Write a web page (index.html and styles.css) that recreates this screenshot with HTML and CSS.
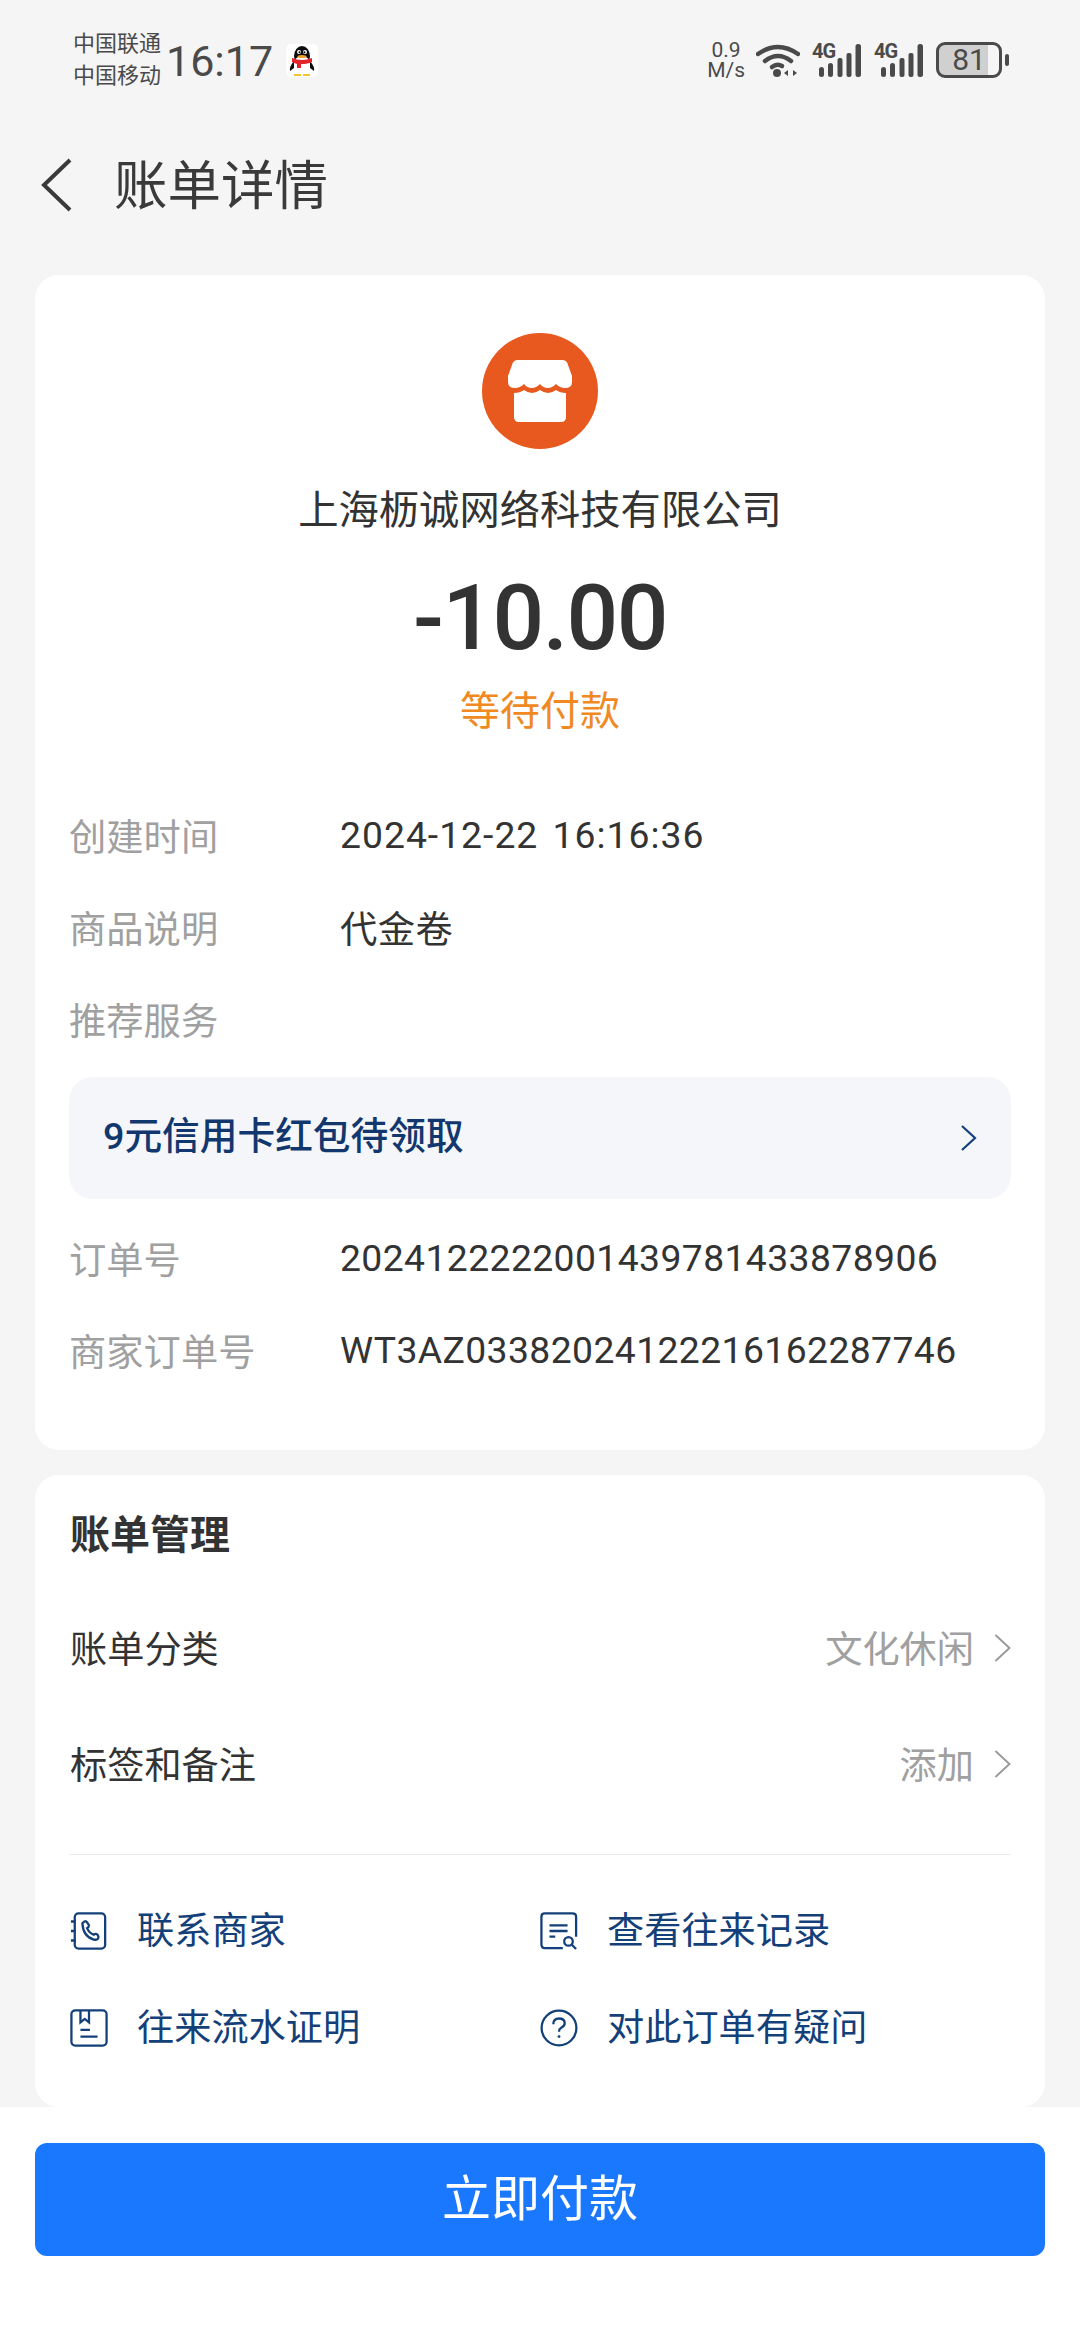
FILE: index.html
```html
<!DOCTYPE html>
<html lang="zh-CN">
<head>
    <meta charset="UTF-8">
    <meta name="viewport" content="width=device-width, initial-scale=1.0">
    <title>账单详情</title>
    <link rel="stylesheet" href="styles.css">
</head>
<body>
    <div class="page">
        <!-- 状态栏 -->
        <div class="status-bar">
            <div class="carrier"><span>中国联通</span><span>中国移动</span></div>
            <div class="clock">16:17</div>
            <svg class="qq-icon" viewBox="0 0 32 33">
                <rect width="32" height="33" rx="5" fill="#fff"/>
                <ellipse cx="16" cy="12" rx="8" ry="10" fill="#0c0c0c"/>
                <path d="M8 17 Q3 23 4 27 L8 24 V17 M24 17 Q29 23 28 27 L24 24 V17" fill="#0c0c0c"/>
                <ellipse cx="16" cy="21" rx="8" ry="9.500" fill="#fff"/>
                <path d="M6 14 Q16 18 26 14 V18 Q22 20 15 20 V24 H11 V20 Q8 19 6 18 Z" fill="#e2242a"/>
                <circle cx="13" cy="8" r="2" fill="#fff"/><circle cx="19" cy="8" r="2" fill="#fff"/>
                <circle cx="13.500" cy="8.300" r="1" fill="#000"/><circle cx="18.500" cy="8.300" r="1" fill="#000"/>
                <ellipse cx="16" cy="12.500" rx="4.500" ry="1.600" fill="#f0a020"/>
                <rect x="8" y="30" width="7" height="2" fill="#f2c230"/><rect x="17" y="30" width="7" height="2" fill="#f2c230"/>
            </svg>
            <div class="status-right">
                <div class="speed"><span>0.9</span><span>M/s</span></div>
                <svg class="wifi" viewBox="0 0 44 34" fill="none" stroke="#4a4a4a" stroke-width="4.500" stroke-linecap="round">
                    <path d="M2 11 Q22 -3 42 11"/>
                    <path d="M9 18 Q22 8 35 18"/>
                    <path d="M16 24 Q21 20 26 23"/>
                    <circle cx="21" cy="30" r="4" fill="#4a4a4a" stroke="none"/>
                    <path d="M32 27 L28 30 L32 33 Z M37 27 L41 30 L37 33 Z" fill="#4a4a4a" stroke="none"/>
                </svg>
                <div class="signal">
                    <span class="signal-type">4G</span>
                    <svg viewBox="0 0 50 34" fill="#4a4a4a">
                        <rect x="7" y="24" width="5" height="10" rx="2.500"/>
                        <rect x="16" y="20" width="5" height="14" rx="2.500"/>
                        <rect x="25.500" y="15" width="5" height="19" rx="2"/>
                        <rect x="34.500" y="10" width="5" height="24" rx="2"/>
                        <rect x="43.500" y="1" width="5.500" height="33" rx="2.500"/>
                    </svg>
                </div>
                <div class="signal">
                    <span class="signal-type">4G</span>
                    <svg viewBox="0 0 50 34" fill="#4a4a4a">
                        <rect x="7" y="24" width="5" height="10" rx="2.500"/>
                        <rect x="16" y="20" width="5" height="14" rx="2.500"/>
                        <rect x="25.500" y="15" width="5" height="19" rx="2"/>
                        <rect x="34.500" y="10" width="5" height="24" rx="2"/>
                        <rect x="43.500" y="1" width="5.500" height="33" rx="2.500"/>
                    </svg>
                </div>
                <div class="battery">
                    <div class="battery-body"><span>81</span></div>
                    <div class="battery-cap"></div>
                </div>
            </div>
        </div>

        <!-- 标题栏 -->
        <div class="title-bar">
            <svg class="back-icon" viewBox="0 0 32 54" fill="none" stroke="#3a3a3a" stroke-width="4">
                <path d="M30 2 L4 27 L30 52"/>
            </svg>
            <h1>账单详情</h1>
        </div>

        <div class="content">
            <div class="card bill-card">
                <div class="shop-avatar">
                    <svg viewBox="0 0 116 116">
                        <circle cx="58" cy="58" r="58" fill="#e8591f"/>
                        <path d="M36 27 H80 Q85 27 86 32 L90 43 V49 Q90 55 83 55 Q78 55 74 51 Q70 55 66 55 Q61 55 58 51 Q54 55 50 55 Q45 55 42 51 Q38 55 33 55 Q26 55 26 49 V43 L30 32 Q31 27 36 27 Z" fill="#fff"/>
                        <path d="M32 60 Q38 60 42 57 Q46 60 50 60 Q54 60 58 57 Q62 60 66 60 Q70 60 74 57 Q78 60 84 60 V84 Q84 89 79 89 H37 Q32 89 32 84 Z" fill="#fff"/>
                    </svg>
                </div>
                <div class="shop-name">上海枥诚网络科技有限公司</div>
                <div class="amount">-10.00</div>
                <div class="pay-status">等待付款</div>

                <div class="info-list">
                    <div class="info-row"><label>创建时间</label><span class="date-value">2024-12-22 16:16:36</span></div>
                    <div class="info-row"><label>商品说明</label><span>代金卷</span></div>
                    <div class="info-row"><label>推荐服务</label></div>
                </div>
                <div class="promo">
                    <span>9元信用卡红包待领取</span>
                    <svg class="promo-arrow" viewBox="0 0 16 26" fill="none" stroke="#14407a" stroke-width="2.200">
                        <path d="M1 1 L14 13 L1 25"/>
                    </svg>
                </div>
                <div class="info-list order-list">
                    <div class="info-row"><label>订单号</label><span>2024122222001439781433878906</span></div>
                    <div class="info-row"><label>商家订单号</label><span>WT3AZ03382024122216162287746</span></div>
                </div>
            </div>

            <div class="card manage-card">
                <h2>账单管理</h2>
                <div class="manage-row">
                    <span>账单分类</span>
                    <div class="manage-value">文化休闲
                        <svg viewBox="0 0 16 26" fill="none" stroke="#9a9a9a" stroke-width="1.800"><path d="M1 1 L14 13 L1 25"/></svg>
                    </div>
                </div>
                <div class="manage-row">
                    <span>标签和备注</span>
                    <div class="manage-value">添加
                        <svg viewBox="0 0 16 26" fill="none" stroke="#9a9a9a" stroke-width="1.800"><path d="M1 1 L14 13 L1 25"/></svg>
                    </div>
                </div>
                <div class="divider"></div>
                <div class="action-grid">
                    <div class="action-item">
                        <svg viewBox="0 0 40 40" fill="none" stroke="#14407a" stroke-width="2.400">
                            <rect x="5" y="1.500" width="32" height="37" rx="4"/>
                            <path d="M1 10 H6 M1 20 H6 M1 30 H6"/>
                            <path d="M13 12 Q16 8 18 11 L20 14 Q20 16 18 17 Q20 22 25 24 Q27 22 29 24 L30 26 Q30 30 25 29 Q14 26 13 12 Z"/>
                        </svg>
                        <span>联系商家</span>
                    </div>
                    <div class="action-item">
                        <svg viewBox="0 0 40 40" fill="none" stroke="#14407a" stroke-width="2.400">
                            <path d="M38 26 V5 Q38 1.500 34 1.500 H5 Q1.500 1.500 1.500 5 V34 Q1.500 38 5 38 H24"/>
                            <path d="M10 14 H29 M10 20 H29 M10 26 H16"/>
                            <circle cx="30" cy="31" r="4.500"/>
                            <path d="M33.500 34.500 L38 39"/>
                        </svg>
                        <span>查看往来记录</span>
                    </div>
                    <div class="action-item">
                        <svg viewBox="0 0 40 40" fill="none" stroke="#14407a" stroke-width="2.400">
                            <rect x="1.500" y="1.500" width="37" height="37" rx="4"/>
                            <path d="M11 2 V14 L15.500 10.500 L20 14 V2"/>
                            <path d="M11 22 H21 M11 29 H29"/>
                        </svg>
                        <span>往来流水证明</span>
                    </div>
                    <div class="action-item">
                        <svg viewBox="0 0 40 40" fill="none" stroke="#14407a" stroke-width="2.400">
                            <circle cx="20" cy="20" r="18.300"/>
                            <path d="M14 16 Q14 10 20 10 Q26 10 26 15 Q26 18 22 20 Q20 21 20 24"/>
                            <circle cx="20" cy="29" r="1.500" fill="#14407a" stroke="none"/>
                        </svg>
                        <span>对此订单有疑问</span>
                    </div>
                </div>
            </div>
        </div>

        <div class="footer">
            <button class="pay-btn">立即付款</button>
        </div>
    </div>
</body>
</html>
```

FILE: styles.css
```css
* {
    box-sizing: border-box;
}

html, body {
    margin: 0;
    padding: 0;
}

body {
    font-family: Roboto, "Noto Sans CJK SC", sans-serif;
    background: #f5f5f5;
    color: #333;
}

.page {
    width: 1080px;
    height: 2340px;
    display: flex;
    flex-direction: column;
    overflow: hidden;
}

/* 状态栏 */
.status-bar {
    height: 120px;
    padding: 28px 71px 0 73px;
    display: flex;
    align-items: flex-start;
    color: #4a4a4a;
}

.carrier {
    display: flex;
    flex-direction: column;
    font-size: 22px;
    line-height: 32px;
}

.clock {
    margin-left: 5px;
    font-size: 43px;
    line-height: 66px;
}

.qq-icon {
    width: 32px;
    height: 33px;
    margin: 16px 0 0 13px;
}

.status-right {
    margin-left: auto;
    display: flex;
    align-items: center;
    height: 38px;
    margin-top: 13px;
}

.speed {
    display: flex;
    flex-direction: column;
    align-items: center;
    font-size: 21px;
    line-height: 20px;
}

.wifi {
    width: 44px;
    height: 34px;
    margin-left: 11px;
}

.signal {
    position: relative;
    width: 50px;
    height: 34px;
    margin-left: 12px;
}

.signal svg {
    display: block;
    width: 50px;
    height: 34px;
}

.signal-type {
    position: absolute;
    left: 0;
    top: -2px;
    font-size: 20px;
    line-height: 20px;
    font-weight: 700;
    letter-spacing: -1px;
}

.battery {
    display: flex;
    align-items: center;
    margin-left: 12px;
}

.battery-body {
    width: 66px;
    height: 36px;
    border: 3px solid #4a4a4a;
    border-radius: 9px;
    background: linear-gradient(to right, #d0d0d0 81%, transparent 81%);
    display: flex;
    align-items: center;
    justify-content: center;
    font-size: 30px;
    line-height: 30px;
}

.battery-cap {
    width: 4px;
    height: 12px;
    margin-left: 3px;
    border-radius: 2px;
    background: #4a4a4a;
}

/* 标题栏 */
.title-bar {
    height: 155px;
    padding: 0 0 26px 40px;
    display: flex;
    align-items: center;
}

.back-icon {
    width: 32px;
    height: 54px;
}

.title-bar h1 {
    margin: 0 0 6px 42px;
    font-size: 53.500px;
    font-weight: 400;
    color: #3a3a3a;
}

.content {
    flex: 1;
    padding: 0 35px;
}

.card {
    background: #fff;
    border-radius: 24px;
    padding-left: 35px;
    padding-right: 35px;
}

.bill-card {
    height: 1175px;
    padding-top: 58px;
    padding-left: 34px;
    padding-right: 34px;
}

.shop-avatar {
    width: 116px;
    height: 116px;
    margin: 0 auto;
}

.shop-avatar svg {
    display: block;
    width: 116px;
    height: 116px;
}

.shop-name {
    margin-top: 34px;
    text-align: center;
    font-size: 40.300px;
    line-height: 56px;
}

.amount {
    margin-top: 29px;
    text-align: center;
    font-size: 91px;
    line-height: 100px;
    font-weight: 500;
    letter-spacing: -1.500px;
    color: #333;
}

.pay-status {
    margin-top: 16px;
    text-align: center;
    font-size: 40px;
    line-height: 56px;
    color: #f0891f;
}

.info-list {
    margin-top: 51px;
}

.order-list {
    margin-top: 15px;
}

.info-row {
    height: 92px;
    padding-bottom: 5px;
    display: flex;
    align-items: center;
    font-size: 37.300px;
    letter-spacing: 0.400px;
}

.info-row label {
    width: 271px;
    flex-shrink: 0;
    color: #a0a0a0;
    letter-spacing: 0;
}

.date-value {
    letter-spacing: 1px;
    word-spacing: 4px;
}

.promo {
    height: 122px;
    margin-top: 10px;
    padding: 0 34px 12px;
    display: flex;
    align-items: center;
    justify-content: space-between;
    border-radius: 24px;
    background: #f4f6fa;
    font-size: 37.700px;
    font-weight: 500;
    color: #12366e;
}

.promo-arrow {
    width: 16px;
    height: 26px;
    margin-top: 12px;
}

.manage-card {
    height: 632px;
    margin-top: 25px;
    padding-top: 33px;
}

.manage-card h2 {
    margin: 0 0 27px 0;
    font-size: 40px;
    line-height: 56px;
    font-weight: 700;
    color: #333;
}

.manage-row {
    height: 116px;
    padding-bottom: 4px;
    display: flex;
    align-items: center;
    justify-content: space-between;
    font-size: 37.200px;
}

.manage-value {
    display: flex;
    align-items: center;
    gap: 20px;
    color: #a0a0a0;
}

.manage-value svg {
    width: 18px;
    height: 28px;
    margin-top: 2px;
    margin-right: -2px;
}

.divider {
    height: 1px;
    margin-top: 31px;
    background: #e8e8e8;
}

.action-grid {
    margin-top: 27px;
    display: grid;
    grid-template-columns: 470px 1fr;
    grid-auto-rows: 97px;
}

.action-item {
    display: flex;
    align-items: center;
    gap: 29px;
    font-size: 37.200px;
    color: #14407a;
}

.action-item span {
    margin-bottom: 5px;
}

.action-item svg {
    width: 38px;
    height: 38px;
    flex-shrink: 0;
}

.footer {
    height: 233px;
    padding: 36px 35px 0;
    background: #fff;
}

.pay-btn {
    width: 100%;
    height: 113px;
    padding: 0 0 10px;
    border: none;
    border-radius: 12px;
    background: #1a78ff;
    color: #fff;
    font-family: inherit;
    font-size: 49px;
}
```
